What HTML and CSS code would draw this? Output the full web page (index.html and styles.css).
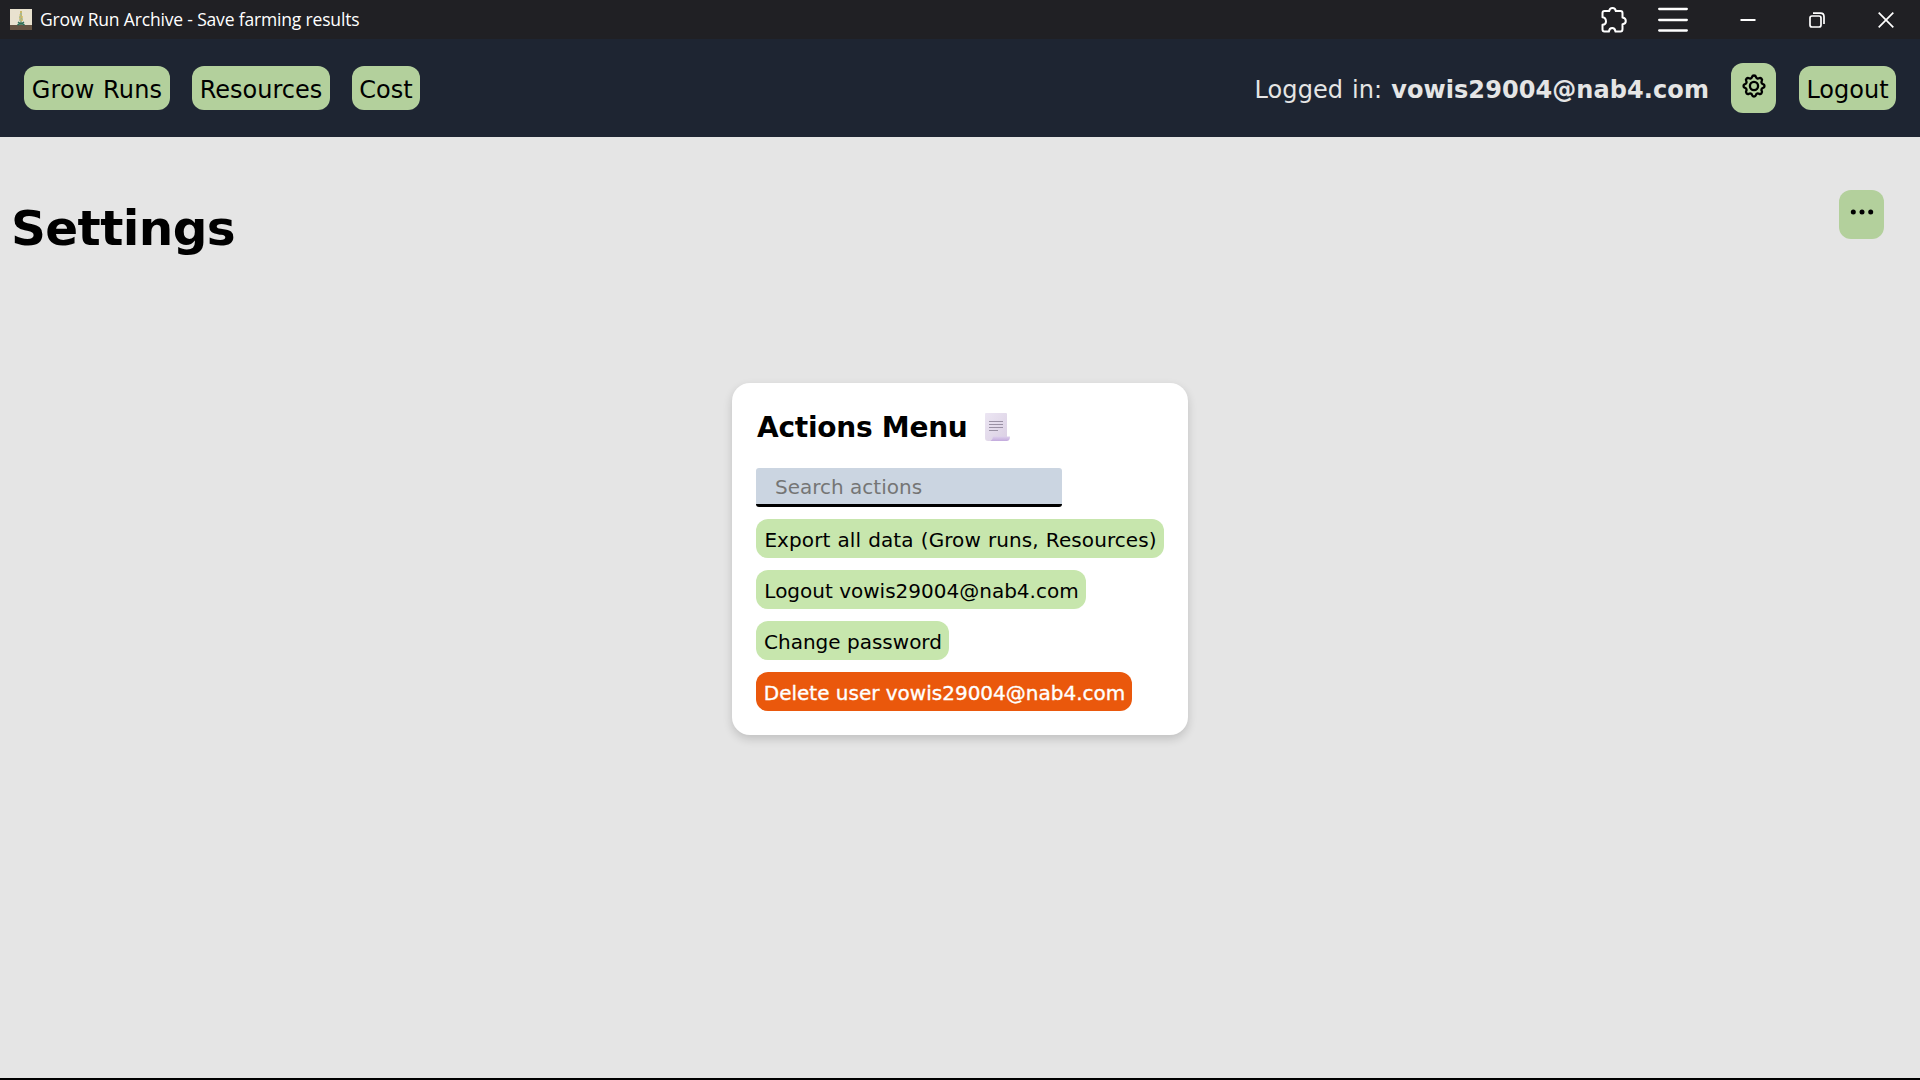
FILE: index.html
```html
<!DOCTYPE html>
<html lang="en">
<head>
<meta charset="utf-8">
<title>Grow Run Archive - Save farming results</title>
<link rel="stylesheet" href="styles.css">
</head>
<body>
<div class="titlebar">
  <svg class="app-icon" width="22" height="21" viewBox="0 0 22 21">
    <rect width="22" height="17" fill="#e9e2cf"/><rect y="16" width="22" height="5" fill="#655342"/>
    <path d="M11 2v14" stroke="#87986a" stroke-width="1.400"/>
    <path d="M10 3h2M9.500 6h2M11 8h2M9 9h2M11 11h2" stroke="#d6bc5c" stroke-width="1.600"/>
    <path d="M10 5h2M9 8h2M9 11h2M12 10h1" stroke="#a7b994" stroke-width="1.400"/>
    <path d="M8 13l3 2 3-2M7.500 16l3.500-2 3.500 2" stroke="#2f6f59" stroke-width="1.500" fill="none"/>
  </svg>
  <span class="window-title">Grow Run Archive - Save farming results</span>
  <div class="window-controls">
    <svg class="puzzle" width="28" height="28" viewBox="0 0 28 28" fill="none" stroke="#fff" stroke-width="2" stroke-linejoin="round">
      <path d="M4.500 5H9.200C9.500 3 10.700 2 12.500 2s3 1 3.300 3H20.500Q22.500 5 22.500 7V11.500C24.600 11.900 25.800 13.100 25.800 14.900s-1.200 3-3.300 3.300V23Q22.500 25.500 20.500 25.500H15.500C15.200 23.300 14.200 22 12.200 22s-3 1.300-3.300 3.500H4.500Q2.500 25.500 2.500 23.500V18.800C4.900 18.500 6 17.300 6 15.400S4.900 11.500 2.500 11.200V7Q2.500 5 4.500 5Z"/>
    </svg>
    <svg class="menu" width="30" height="26" viewBox="0 0 30 26" stroke="#fff" stroke-width="2.300" stroke-linecap="round"><path d="M1.200 2H28.800M1.200 13H28.800M1.200 23.500H28.800"/></svg>
    <svg class="minimize" width="16" height="16" viewBox="0 0 16 16"><path d="M.5 8h15" stroke="#fff" stroke-width="2"/></svg>
    <svg class="restore" width="16" height="16" viewBox="0 0 16 16" fill="none" stroke="#fff" stroke-width="1.700"><rect x="1" y="4" width="11" height="11" rx="2"/><path d="M4 1.200h7.500Q15 1.200 15 4.700V12"/></svg>
    <svg class="close" width="16" height="16" viewBox="0 0 16 16" stroke="#fff" stroke-width="1.700"><path d="M.7.700l14.600 14.600M15.300.700L.7 15.300"/></svg>
  </div>
</div>
<nav class="navbar">
  <button class="btn grow">Grow Runs</button>
  <button class="btn resources">Resources</button>
  <button class="btn cost">Cost</button>
  <div class="account">Logged in: <strong>vowis29004@nab4.com</strong></div>
  <button class="icon-btn" aria-label="Settings">
    <svg class="gear" width="28" height="28" viewBox="0 0 24 24" fill="none" stroke="#000" stroke-width="2" stroke-linecap="round" stroke-linejoin="round"><path d="M10.325 4.317c.426-1.756 2.924-1.756 3.350 0a1.724 1.724 0 0 0 2.573 1.066c1.543-.94 3.310.826 2.370 2.370a1.724 1.724 0 0 0 1.065 2.572c1.756.426 1.756 2.924 0 3.350a1.724 1.724 0 0 0-1.066 2.573c.94 1.543-.826 3.310-2.370 2.370a1.724 1.724 0 0 0-2.572 1.065c-.426 1.756-2.924 1.756-3.350 0a1.724 1.724 0 0 0-2.573-1.066c-1.543.94-3.310-.826-2.370-2.370a1.724 1.724 0 0 0-1.065-2.572c-1.756-.426-1.756-2.924 0-3.350a1.724 1.724 0 0 0 1.066-2.573c-.94-1.543.826-3.310 2.370-2.370a1.724 1.724 0 0 0 2.572-1.065z"/><circle cx="12" cy="12" r="3.500"/></svg>
  </button>
  <button class="btn logout">Logout</button>
</nav>
<main class="page">
  <div class="page-head">
    <h1>Settings</h1>
    <button class="icon-btn more" aria-label="More"><svg width="24" height="6" viewBox="0 0 24 6"><circle cx="3.300" cy="3" r="2.500"/><circle cx="12" cy="3" r="2.500"/><circle cx="20.700" cy="3" r="2.500"/></svg></button>
  </div>
  <section class="card">
    <h2>Actions Menu
      <svg width="26" height="28" viewBox="0 0 26 28">
        <defs>
          <linearGradient id="paper" x2="1" y2="1"><stop stop-color="#ece6f3"/><stop offset="1" stop-color="#dacfe3"/></linearGradient>
          <linearGradient id="curl" y2="1" x2="0"><stop stop-color="#dccfeb"/><stop offset="1" stop-color="#c3aadd"/></linearGradient>
        </defs>
        <path d="M1 0H21Q22 0 22 1V28H3Q0 28 0 25V1Q0 0 1 0Z" fill="url(#paper)"/>
        <path d="M8 23.500H25Q25 28 21.500 28H5.500Q8 26.500 8 23.500Z" fill="url(#curl)"/>
        <path d="M4 8.500h14M4 11.500h14M4 14.500h14M4 17.500h9" stroke="#9a91a4"/>
      </svg>
    </h2>
    <input class="search" type="text" placeholder="Search actions">
    <button class="action export">Export all data (Grow runs, Resources)</button>
    <button class="action signout">Logout vowis29004@nab4.com</button>
    <button class="action password">Change password</button>
    <button class="action danger">Delete user vowis29004@nab4.com</button>
  </section>
</main>
</body>
</html>
```
FILE: styles.css
```css
* { box-sizing: border-box; }

body {
  margin: 0;
  height: 1080px;
  display: flex;
  flex-direction: column;
  overflow: hidden;
  background: #e5e5e5;
  border-bottom: 2px solid #000;
  color: #000;
  font-family: Verdana, "DejaVu Sans", sans-serif;
}

button, input {
  font-family: inherit;
  border: 0;
  margin: 0;
  color: #000;
}

svg { display: block; flex: none; }

.titlebar {
  flex: none;
  height: 39px;
  display: flex;
  align-items: center;
  padding: 0 26px 1px 10px;
  background: #202024;
  color: #fff;
}
.app-icon { margin-right: 8px; }
.window-title {
  font: 17.5px "Segoe UI", "Open Sans", sans-serif;
  white-space: nowrap;
  letter-spacing: -0.17px;
}
.window-controls {
  margin-left: auto;
  padding-top: 1px;
  display: flex;
  align-items: center;
}
.menu { margin-left: 30px; }
.minimize { margin-left: 52px; }
.restore { margin-left: 53px; }
.close { margin-left: 53px; }

.navbar {
  flex: none;
  height: 98px;
  display: flex;
  align-items: center;
  padding: 0 24px;
  background: #1e2532;
}
.btn {
  height: 44px;
  padding: 3px 0 0;
  border-radius: 12px;
  background: #b3d09c;
  font-size: 24px;
  line-height: 28px;
  white-space: nowrap;
}
.grow { width: 146px; letter-spacing: 0.12px; word-spacing: 0.8px; }
.resources { width: 138px; margin-left: 22px; }
.cost { width: 68px; margin-left: 22px; }
.logout { width: 97px; margin-left: 23px; }
.account {
  margin-left: auto;
  margin-right: 22px;
  padding-top: 3px;
  color: #e5e5e5;
  font-size: 24px;
  letter-spacing: 0.08px;
  word-spacing: 1.2px;
  white-space: nowrap;
}
.icon-btn {
  width: 45px;
  height: 50px;
  padding: 0 0 5px;
  display: flex;
  align-items: center;
  justify-content: center;
  border-radius: 12px;
  background: #b3d09c;
}

.page { flex: 1; }
.page-head {
  height: 246px;
  display: flex;
  justify-content: space-between;
  align-items: flex-start;
  padding: 53px 36px 0 11px;
}
h1 {
  margin: 10px 0 0;
  font-size: 48.5px;
  line-height: 56px;
  letter-spacing: -0.6px;
}
.more { height: 49px; }

.card {
  width: 456px;
  height: 352px;
  margin: 0 auto;
  padding: 24px;
  display: flex;
  flex-direction: column;
  align-items: flex-start;
  gap: 12px;
  border-radius: 18px;
  background: #fff;
  box-shadow: 0 4px 10px rgba(0, 0, 0, 0.16);
}
h2 {
  margin: 0 0 10px;
  height: 39px;
  padding: 1px 0 0 1px;
  display: flex;
  align-items: center;
  gap: 17px;
  font-size: 28px;
  letter-spacing: -0.25px;
  white-space: nowrap;
}
.search {
  width: 306px;
  height: 39px;
  padding: 1px 19px 0;
  border-bottom: 3px solid #000;
  border-radius: 3px;
  background: #cbd5e1;
  font-size: 20px;
}
.search::placeholder { color: #757575; }
.action {
  height: 39px;
  padding: 2px 0 0 1px;
  border-radius: 12px;
  background: #c7e6ad;
  font-size: 20px;
  white-space: nowrap;
}
.export { width: 408px; letter-spacing: 0.08px; word-spacing: 0.7px; }
.signout { width: 330px; }
.password { width: 193px; }
.danger {
  width: 376px;
  background: #ea580c;
  color: #fff;
  -webkit-text-stroke: 0.35px #fff;
}
```
